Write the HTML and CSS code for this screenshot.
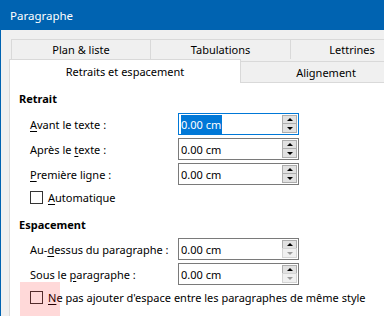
FILE: index.html
```html
<!DOCTYPE html>
<html lang="fr">
<head>
  <meta charset="UTF-8" />
  <title>Paragraphe</title>
  <link rel="stylesheet" href="styles.css">
</head>
<body>
<div class="window">
  <div class="titlebar">Paragraphe</div>

  <div class="dialog">
    <!-- back row of tabs -->
    <div class="tabs tabs-back">
      <div class="tab tab-plan">Plan &amp; liste</div>
      <div class="tab tab-tabulations">Tabulations</div>
      <div class="tab tab-lettrines">Lettrines</div>
    </div>

    <!-- front row of tabs -->
    <div class="tabs tabs-front">
      <div class="tab tab-active">Retraits et espacement</div>
      <div class="tab tab-align">Alignement</div>
    </div>

    <div class="panel">
      <h3 class="group-title">Retrait</h3>
      <div class="fields">
        <label class="field-label"><u>A</u>vant le texte :</label>
        <div class="spin focused">
          <span class="value"><span class="selection">0.00 cm</span></span>
          <div class="spin-btns">
            <span class="spin-btn up"></span>
            <span class="spin-btn down"></span>
          </div>
        </div>

        <label class="field-label">Après le <u>t</u>exte :</label>
        <div class="spin">
          <span class="value">0.00 cm</span>
          <div class="spin-btns">
            <span class="spin-btn up"></span>
            <span class="spin-btn down"></span>
          </div>
        </div>

        <label class="field-label"><u>P</u>remière ligne :</label>
        <div class="spin">
          <span class="value">0.00 cm</span>
          <div class="spin-btns">
            <span class="spin-btn up"></span>
            <span class="spin-btn down"></span>
          </div>
        </div>
      </div>
      <label class="check"><span class="box"></span><span><u>A</u>utomatique</span></label>

      <h3 class="group-title spaced">Espacement</h3>
      <div class="fields fields-tight">
        <label class="field-label">Au-<u>d</u>essus du paragraphe :</label>
        <div class="spin">
          <span class="value">0.00 cm</span>
          <div class="spin-btns">
            <span class="spin-btn up"></span>
            <span class="spin-btn down disabled"></span>
          </div>
        </div>

        <label class="field-label">Sous le <u>p</u>aragraphe :</label>
        <div class="spin">
          <span class="value">0.00 cm</span>
          <div class="spin-btns">
            <span class="spin-btn up"></span>
            <span class="spin-btn down disabled"></span>
          </div>
        </div>
      </div>
      <label class="check check-last">
        <span class="box"></span><span><u>N</u>e pas ajouter d'espace entre les paragraphes de même style</span>
        <span class="highlight"></span>
      </label>
    </div>
  </div>
</div>
</body>
</html>
```

FILE: styles.css
```css
body {
  margin: 0;
  font-family: "Segoe UI", "Noto Sans", sans-serif;
  font-size: 11px;
  color: #000;
  background: #f0f0f0;
}
.window {
  width: 384px;
  height: 316px;
  overflow: hidden;
  background: #f0f0f0;
}
.titlebar {
  height: 30px;
  line-height: 31px;
  padding-left: 10px;
  font-size: 11.5px;
  background: #0063b1;
  color: #fff;
}
.dialog {
  height: 286px;
  border-left: 1px solid #0063b1;
  display: flex;
  flex-direction: column;
}

/* tabs */
.tabs {
  display: flex;
  flex: none;
}
.tabs-back {
  margin-top: 9px;
  padding-left: 10px;
}
.tab {
  box-sizing: border-box;
  flex: none;
  border: 1px solid #d9d9d9;
  border-bottom: none;
  background: #f0f0f0;
  text-align: center;
  white-space: nowrap;
}
.tab + .tab {
  margin-left: -1px;
}
.tabs-back .tab {
  height: 20px;
  line-height: 19px;
}
.tab-plan { width: 140px; }
.tab-tabulations { width: 141px; }
.tab-lettrines { width: 124px; }

.tabs-front {
  align-items: flex-start;
  padding-left: 8px;
  margin-bottom: -1px;
  position: relative;
  z-index: 1;
}
.tab-active {
  width: 232px;
  height: 24px;
  line-height: 24px;
  background: #fff;
}
.tab-align {
  width: 172px;
  height: 21px;
  margin-top: 2px;
  line-height: 21px;
}

/* page body */
.panel {
  flex: 1;
  margin-left: 8px;
  border-top: 1px solid #d9d9d9;
  border-left: 1px solid #d9d9d9;
  background: #fff;
  padding: 8px 0 0 9px;
}
.group-title {
  margin: 0;
  font-size: 11px;
  font-weight: bold;
  line-height: 16px;
}
.group-title.spaced {
  margin-top: 12px;
}
.fields {
  display: grid;
  grid-template-columns: 148px 121px;
  row-gap: 3px;
  margin-top: 6px;
  padding-left: 11px;
}
.fields-tight {
  margin-top: 5px;
}
.field-label {
  align-self: center;
  white-space: nowrap;
}
u {
  text-underline-offset: 2px;
}

.spin {
  box-sizing: border-box;
  height: 22px;
  border: 1px solid #7a7a7a;
  background: #fff;
  display: flex;
  align-items: center;
}
.spin.focused {
  border-color: #0078d7;
}
.value {
  padding-left: 2px;
  white-space: nowrap;
}
.selection {
  background: #0078d7;
  color: #fff;
  padding: 2px 1px 2px 0;
}
.spin-btns {
  margin-left: auto;
  margin-right: 1px;
  width: 15px;
  display: flex;
  flex-direction: column;
  align-self: stretch;
  justify-content: center;
}
.spin-btn {
  box-sizing: border-box;
  height: 9px;
  border: 1px solid #adadad;
  background: #e1e1e1;
  display: flex;
  align-items: center;
  justify-content: center;
}
.spin-btn + .spin-btn {
  margin-top: -1px;
  height: 10px;
}
.spin-btn::after {
  content: "";
  border-left: 3px solid transparent;
  border-right: 3px solid transparent;
}
.spin-btn.up::after {
  border-bottom: 3px solid #000;
}
.spin-btn.down::after {
  border-top: 3px solid #000;
}
.spin-btn.disabled {
  background: #f0f0f0;
  border-color: #d4d4d4;
}
.spin-btn.down.disabled::after {
  border-top-color: #9a9a9a;
}

/* checkboxes */
.check {
  display: flex;
  align-items: center;
  gap: 5px;
  height: 16px;
  margin-top: 4px;
  padding-left: 11px;
  white-space: nowrap;
}
.box {
  box-sizing: border-box;
  width: 13px;
  height: 13px;
  border: 1px solid #333;
  background: #fff;
  flex: none;
}
.check-last {
  position: relative;
}
.highlight {
  position: absolute;
  left: 1px;
  top: -7px;
  width: 40px;
  height: 34px;
  background: rgba(255, 0, 0, 0.15);
}
```
